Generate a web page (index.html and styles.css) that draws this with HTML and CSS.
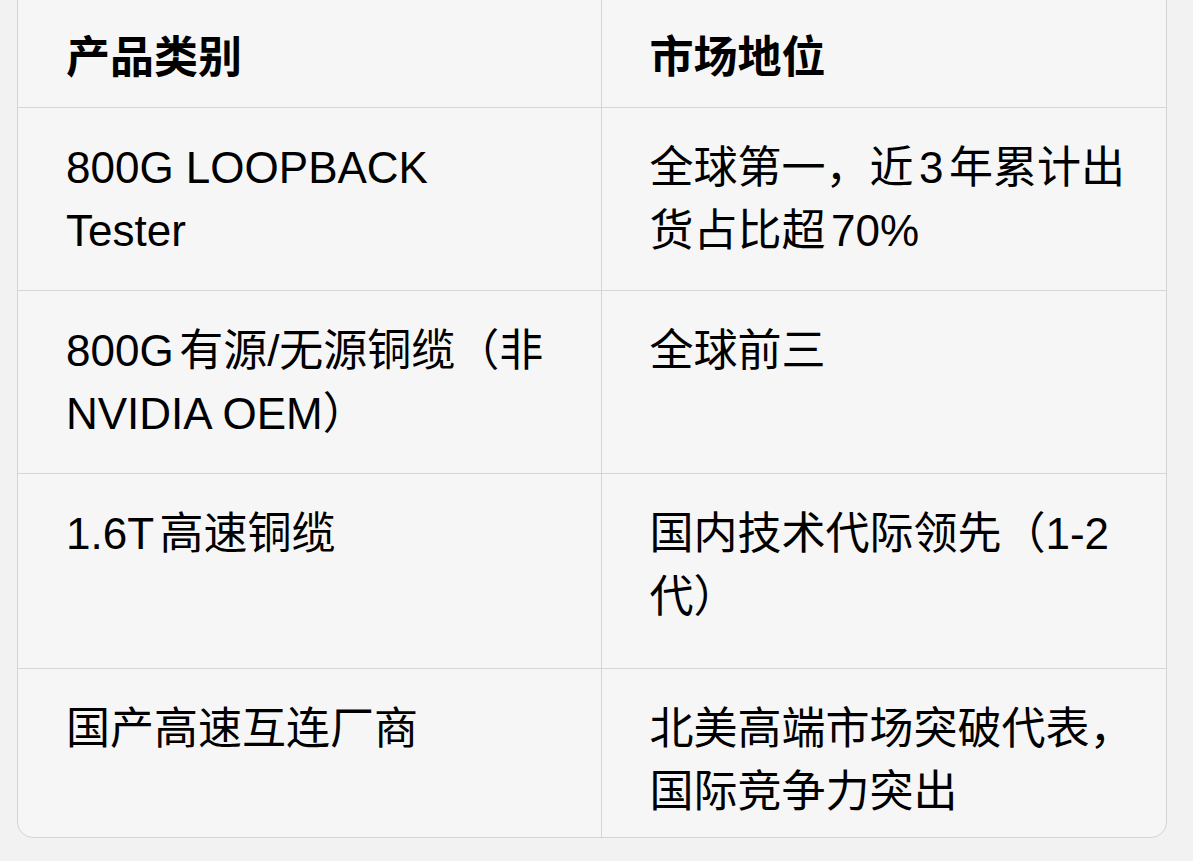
FILE: index.html
```html
<!DOCTYPE html>
<html lang="zh-CN">
<head>
<meta charset="utf-8">
<title>产品市场地位</title>
<link rel="stylesheet" href="styles.css">
</head>
<body>
<div class="table-wrap">
  <table class="data-table">
    <colgroup>
      <col class="col-product">
      <col class="col-position">
    </colgroup>
    <thead>
      <tr>
        <th>产品类别</th>
        <th>市场地位</th>
      </tr>
    </thead>
    <tbody>
      <tr>
        <td>800G LOOPBACK Tester</td>
        <td>全球第一，近3年累计出货占比超70%</td>
      </tr>
      <tr>
        <td>800G有源/无源铜缆（非NVIDIA OEM）</td>
        <td>全球前三</td>
      </tr>
      <tr class="row-tall">
        <td>1.6T高速铜缆</td>
        <td>国内技术代际领先（1-2代）</td>
      </tr>
      <tr class="row-last">
        <td>国产高速互连厂商</td>
        <td>北美高端市场突破代表，国际竞争力突出</td>
      </tr>
    </tbody>
  </table>
</div>
</body>
</html>
```
FILE: styles.css
```css
html, body {
  margin: 0;
  padding: 0;
  background: #f2f2f2;
}

body {
  height: 861px;
  overflow: hidden;
  font-family: "Liberation Sans", "Noto Sans CJK SC", sans-serif;
  color: #000;
}

.table-wrap {
  margin: -16px 0 0 17px;
  width: 1150px;
  box-sizing: border-box;
  border: 1px solid #d4d4d4;
  border-radius: 16px;
  background: #f6f6f6;
  overflow: hidden;
}

.data-table {
  width: 100%;
  border-collapse: collapse;
  table-layout: fixed;
  font-size: 44px;
  line-height: 63px;
  text-autospace: normal;
}

.col-product {
  width: 583px;
}

.data-table th,
.data-table td {
  box-sizing: border-box;
  text-align: left;
  vertical-align: top;
  padding: 28px 48px 28px 48px;
  border-bottom: 1px solid #d6d6d6;
  border-right: 1px solid #d6d6d6;
}

.data-table th:last-child,
.data-table td:last-child {
  border-right: none;
  padding-right: 26px;
}

.data-table th {
  font-weight: 700;
  font-family: "Noto Sans CJK SC", sans-serif;
  padding-top: 38px;
  padding-bottom: 21px;
}

.row-tall td {
  padding-bottom: 40px;
}

.row-last td {
  border-bottom: none;
  padding-bottom: 14px;
}
```
